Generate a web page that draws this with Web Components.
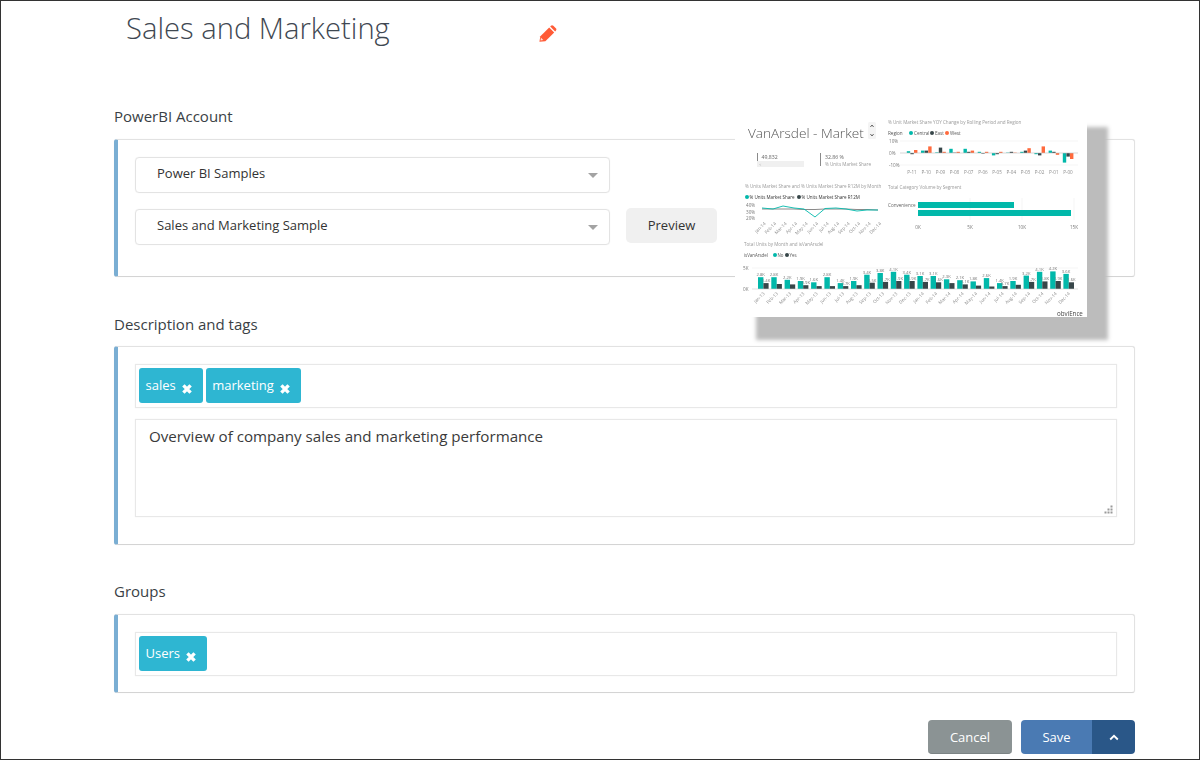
<!DOCTYPE html>
<html lang="en">
<head>
<meta charset="utf-8">
<title>Sales and Marketing</title>
<style>
  html, body { margin: 0; padding: 0; background: #fff; }
  body { font-family: "Open Sans", "Liberation Sans", sans-serif; color: #333; }
</style>
</head>
<body>
<report-page>
  <report-title slot="title">Sales and Marketing</report-title>

  <form-panel label="PowerBI Account" style="--bottom:31px">
    <div style="display:flex;flex-direction:column;gap:16px">
      <select-box>Power BI Samples</select-box>
      <div style="display:flex;align-items:center;gap:16px">
        <select-box>Sales and Marketing Sample</select-box>
        <plain-button>Preview</plain-button>
      </div>
    </div>
  </form-panel>

  <form-panel label="Description and tags" style="--bottom:27px;--label-gap:37px;--label-bottom:12px">
    <tag-box>
      <tag-chip>sales</tag-chip>
      <tag-chip>marketing</tag-chip>
    </tag-box>
    <note-box style="margin-top:11px">Overview of company sales and marketing performance</note-box>
  </form-panel>

  <form-panel label="Groups" style="--bottom:16px;--label-gap:36px">
    <tag-box>
      <tag-chip>Users</tag-chip>
    </tag-box>
  </form-panel>

  <action-bar></action-bar>
  <report-preview></report-preview>
</report-page>

<script>
class ReportPage extends HTMLElement {
  constructor() {
    super();
    this.attachShadow({mode: "open"});
    this.shadowRoot.innerHTML = `
    <style>
      :host {
        display: block;
        position: relative;
        box-sizing: border-box;
        width: 1200px;
        height: 760px;
        overflow: hidden;
        border: 1px solid #333;
        padding: 7px 64px 0 113px;
      }
    </style>
    <slot name="title"></slot>
    <slot></slot>
    `;
  }
}

class ReportTitle extends HTMLElement {
  constructor() {
    super();
    this.attachShadow({mode: "open"});
    this.shadowRoot.innerHTML = `
    <style>
      :host {
        display: flex;
        align-items: flex-start;
        margin: 0 0 0 12px;
      }
      h1 {
        margin: 0;
        width: 413px;
        font: 300 29.2px/40px "Open Sans", "Liberation Sans", sans-serif;
        color: #3f4852;
      }
      svg { margin-top: 17px; }
    </style>
    <h1><slot></slot></h1>
    <svg width="18" height="17" viewBox="0 0 18 17">
      <path fill="#ff5b37" d="M.4 16.7 1.4 11.2 10.2 2.4l5 5-8.8 8.8z"/>
      <path fill="#ff5b37" d="M11.2 1.5l.7-.7a1.7 1.7 0 0 1 2.4 0l2.5 2.5a1.7 1.7 0 0 1 0 2.4l-.7.7z"/>
      <path fill="#ffe0d8" d="M1.5 15.6l.5-2.8 2.3 2.3z"/>
    </svg>
    `;
  }
}

class FormPanel extends HTMLElement {
  constructor() {
    super();
    this.attachShadow({mode: "open"});
    this.shadowRoot.innerHTML = `
    <style>
      :host { display: block; }
      .label {
        font-size: 15px;
        line-height: 20px;
        color: #3a3f45;
        margin: var(--label-gap, 58px) 0 var(--label-bottom, 13px) 0;
      }
      .card {
        box-sizing: border-box;
        background: #fff;
        border: 1px solid #e2e2e2;
        border-bottom-color: #d4d4d4;
        border-left: 4px solid #7aaed3;
        border-radius: 3px;
        box-shadow: 0 0 1px #e6e6e6;
        padding: 17px 17px var(--bottom, 17px) 17px;
      }
    </style>
    <div class="label"></div>
    <div class="card"><slot></slot></div>
    `;
    this.shadowRoot.querySelector(".label").textContent = this.getAttribute("label");
  }
}

class SelectBox extends HTMLElement {
  constructor() {
    super();
    this.attachShadow({mode: "open"});
    this.shadowRoot.innerHTML = `
    <style>
      :host {
        display: flex;
        align-items: center;
        justify-content: space-between;
        box-sizing: border-box;
        width: 475px;
        height: 36px;
        padding: 0 11px 0 21px;
        border: 1px solid #e3e3e3;
        border-radius: 4px;
        box-shadow: 0 0 1px #e8e8e8;
        font-size: 13px;
        color: #333;
      }
      span { margin-top: -4px; }
      i {
        width: 0;
        height: 0;
        border: 5px solid transparent;
        border-top: 5px solid #a3a3a3;
        border-bottom: 0;
      }
    </style>
    <span><slot></slot></span><i></i>
    `;
  }
}

class PlainButton extends HTMLElement {
  constructor() {
    super();
    this.attachShadow({mode: "open"});
    this.shadowRoot.innerHTML = `
    <style>
      :host {
        display: flex;
        align-items: center;
        justify-content: center;
        box-sizing: border-box;
        width: 91px;
        height: 35px;
        padding-bottom: 2px;
        margin-top: -3px;
        background: #f0f0f0;
        border-radius: 5px;
        font-size: 13px;
        color: #333;
      }
    </style>
    <slot></slot>
    `;
  }
}

class TagBox extends HTMLElement {
  constructor() {
    super();
    this.attachShadow({mode: "open"});
    this.shadowRoot.innerHTML = `
    <style>
      :host {
        display: flex;
        gap: 3px;
        box-sizing: border-box;
        height: 44px;
        padding: 3px;
        border: 1px solid #e8e8e8;
        box-shadow: 0 0 1px #ececec;
      }
    </style>
    <slot></slot>
    `;
  }
}

class TagChip extends HTMLElement {
  constructor() {
    super();
    this.attachShadow({mode: "open"});
    this.shadowRoot.innerHTML = `
    <style>
      :host {
        display: inline-flex;
        align-items: center;
        gap: 6px;
        box-sizing: border-box;
        height: 35px;
        padding: 0 11px 0 6.5px;
        background: #2eb6d2;
        border-radius: 3px;
        color: #fff;
        font-size: 13px;
      }
      span { margin-top: -2px; }
      svg { margin-top: 6px; }
    </style>
    <span><slot></slot></span>
    <svg width="10" height="10" viewBox="0 0 10 10">
      <path d="M1.4 1.4l7.2 7.2M8.6 1.4l-7.2 7.2" stroke="#fff" stroke-width="3.4" fill="none"/>
    </svg>
    `;
  }
}

class NoteBox extends HTMLElement {
  constructor() {
    super();
    this.attachShadow({mode: "open"});
    this.shadowRoot.innerHTML = `
    <style>
      :host {
        display: block;
        position: relative;
        box-sizing: border-box;
        height: 98px;
        padding: 6px 13px;
        border: 1px solid #e8e8e8;
        box-shadow: 0 0 1px #ececec;
        font-size: 15.15px;
        line-height: 20px;
        color: #3a3a3a;
      }
      /* resize grip sits over the corner of the box */
      svg { position: absolute; right: 3px; bottom: 2px; }
    </style>
    <slot></slot>
    <svg width="9" height="9" viewBox="0 0 9 9" fill="#9a9a9a">
      <rect x="6.5" y="0.5" width="2" height="2"/>
      <rect x="3.5" y="3.5" width="2" height="2"/>
      <rect x="6.5" y="3.5" width="2" height="2"/>
      <rect x="0.5" y="6.5" width="2" height="2"/>
      <rect x="3.5" y="6.5" width="2" height="2"/>
      <rect x="6.5" y="6.5" width="2" height="2"/>
    </svg>
    `;
  }
}

class ActionBar extends HTMLElement {
  constructor() {
    super();
    this.attachShadow({mode: "open"});
    this.shadowRoot.innerHTML = `
    <style>
      :host {
        display: flex;
        justify-content: flex-end;
        gap: 9px;
        margin-top: 27px;
        font-size: 13px;
        color: #fff;
      }
      div {
        display: flex;
        align-items: center;
        justify-content: center;
        box-sizing: border-box;
        height: 34px;
      }
      .cancel { width: 84px; background: #8b9394; border-radius: 4px; border-bottom: 1px solid #7b8384; }
      .save { width: 71px; background: #4a7ab3; border-radius: 4px 0 0 4px; }
      .more { width: 43px; margin-left: -9px; background: #2a5788; border-radius: 0 4px 4px 0; }
    </style>
    <div class="cancel">Cancel</div>
    <div class="save">Save</div>
    <div class="more">
      <svg width="10" height="7" viewBox="0 0 10 7">
        <path d="M1.2 5.5 5 1.8l3.8 3.7" stroke="#fff" stroke-width="1.8" fill="none"/>
      </svg>
    </div>
    `;
  }
}

class ReportPreview extends HTMLElement {
  constructor() {
    super();
    this.attachShadow({mode: "open"});
    this.shadowRoot.innerHTML = `
    <style>
      :host {
        display: block;
        position: absolute;
        left: 734px;
        top: 103px;
        width: 352px;
        height: 213px;
        background: #fff;
        box-shadow: 21px 23px 4px #bcbcbc;
      }
      svg {
        display: block;
        filter: blur(.4px);
        font-family: "Open Sans", "Liberation Sans", sans-serif;
      }
    </style>
    ${this.chart()}
    `;
  }

  label(x, y, size, str, fill, extra) {
    return `<text x="${x}" y="${y}" font-size="${size}" fill="${fill || "#9a9a9a"}" ${extra || ""}>${str}</text>`;
  }

  dot(x, y, fill) {
    return `<circle cx="${x}" cy="${y}" r="2" fill="${fill}"/>`;
  }

  slanted(x, y, str) {
    return `<text x="${x}" y="${y}" font-size="4.5" fill="#8d8d8d" text-anchor="end" transform="rotate(-45 ${x} ${y})">${str}</text>`;
  }

  yoyChart() {
    const teal = "#01b8aa", dark = "#374649";
    const orange = "#ff6a3d";
    const rows = [[1.5,-1,2.5],[2,2,5.5],[.5,4.5,1],[3.5,.3,1],[3.5,1,2],[1,-.5,1],[-2,-1,1],[.3,1,.3],[1,2,4],[-1,-2,5.5],[2,1,-1.5],[-8,-3,-5]];
    const colors = [teal, dark, orange];
    let out = "";
    out += this.label(888, 124, 4.6, "% Unit Market Share YOY Change by Rolling Period and Region");
    out += this.label(888, 135, 4.6, "Region", "#555");
    out += this.dot(911, 133, teal) + this.label(914, 135, 4.6, "Central", "#555");
    out += this.dot(932, 133, dark) + this.label(935, 135, 4.6, "East", "#555");
    out += this.dot(947, 133, orange) + this.label(950, 135, 4.6, "West", "#555");
    [["10%",141],["0%",153],["-10%",165]].forEach(([t, y]) => {
      out += this.label(889, y + 1.5, 4.6, t, "#777");
      if (y !== 153) out += `<line x1="900" x2="1078" y1="${y}" y2="${y}" stroke="#efefef" stroke-width=".6"/>`;
    });
    rows.forEach((r, i) => {
      const cx = 912 + i * 14.18;
      r.forEach((v, j) => {
        const h = Math.abs(v) * 1.2;
        const y = v > 0 ? 153 - h : 153;
        out += `<rect x="${(cx - 5.2 + j * 3.6).toFixed(1)}" y="${y}" width="3.4" height="${h}" fill="${colors[j]}"/>`;
      });
      const name = "P-" + String(11 - i).padStart(2, "0");
      out += `<text x="${cx.toFixed(1)}" y="173.5" font-size="4.6" fill="#8d8d8d" text-anchor="middle">${name}</text>`;
    });
    out += `<line x1="900" x2="1078" y1="153" y2="153" stroke="#bdbdbd" stroke-width=".6"/>`;
    return out;
  }

  lineChart() {
    const teal = "#01b8aa", dark = "#374649";
    const months = ["Jan","Feb","Mar","Apr","May","Jun","Jul","Aug","Sep","Oct","Nov","Dec"];
    let out = "";
    out += this.label(745, 187.5, 4.56, "% Units Market Share and % Units Market Share R12M by Month");
    out += this.dot(747, 197, teal) + this.label(749.5, 199, 4.5, "% Units Market Share", "#333");
    out += this.dot(799, 197, dark) + this.label(801.5, 199, 4.5, "% Units Market Share R12M", "#333");
    [["40%",205],["30%",212],["20%",218]].forEach(([t, y]) => {
      out += this.label(746, y + 1.5, 4.6, t, "#777");
    });
    out += `<polyline fill="none" stroke="#8a8a8a" stroke-width="1" points="762,209 773,209 783,209 794,209 804,209.5 815,209.5 825,209 836,209 846,209 857,209.5 867,209.5 878,210"/>`;
    out += `<polyline fill="none" stroke="${teal}" stroke-width=".9" points="762,208 773,209 783,206 794,208 804,209 815,217 825,208.5 836,208 846,209 857,211 867,210 878,210"/>`;
    months.forEach((m, i) => {
      out += this.slanted(766 + i * 10.5, 224, m + "-14");
    });
    return out;
  }

  segmentChart() {
    const teal = "#01b8aa";
    let out = "";
    out += this.label(888, 189, 4.5, "Total Category Volume by Segment");
    out += this.label(888, 207, 4.6, "Convenience", "#666");
    ["0K","5K","10K","15K"].forEach((t, i) => {
      const x = 918 + i * 52;
      if (i) out += `<line x1="${x}" x2="${x}" y1="198" y2="220" stroke="#efefef" stroke-width=".6"/>`;
      out += `<text x="${x}" y="229" font-size="4.6" fill="#777" text-anchor="middle">${t}</text>`;
    });
    out += `<rect x="918" y="202" width="96" height="6" fill="${teal}"/>`;
    out += `<rect x="918" y="210" width="153" height="6" fill="${teal}"/>`;
    return out;
  }

  unitsChart() {
    const teal = "#01b8aa", dark = "#374649";
    const months = ["Jan","Feb","Mar","Apr","May","Jun","Jul","Aug","Sep","Oct","Nov","Dec"];
    const no = [2.8,2.8,2.2,1.9,1.6,2.8,1.4,1.9,3.4,3.8,4.1,3.4,3.1,3.1,2.3,2.1,1.8,2.6,1.4,1.9,3.2,4.1,4.2,3.6];
    const yes = [1.4,1.2,1.1,.9,.7,.7,.7,.9,1.5,1.7,1.9,1.9,1.7,1.6,1.4,1.1,.8,.6,.7,1,1.7,1.8,1.9,1.6];
    let out = "";
    out += this.label(744, 245.5, 4.55, "Total Units by Month and isVanArsdel");
    out += this.label(744, 257, 4.4, "isVanArsdel", "#555");
    out += this.dot(775, 255, teal) + this.label(777.5, 257, 4.4, "No", "#555");
    out += this.dot(787, 255, dark) + this.label(789.5, 257, 4.4, "Yes", "#555");
    out += this.label(743, 270, 4.6, "5K", "#777") + this.label(743, 291, 4.6, "0K", "#777");
    out += `<line x1="752" x2="1078" y1="268" y2="268" stroke="#efefef" stroke-width=".6"/>`;
    no.forEach((v, i) => {
      const x = 758 + i * 13.28;
      const h1 = v * 4.2, h2 = yes[i] * 4.2;
      out += `<rect x="${x.toFixed(1)}" y="${(289 - h1).toFixed(1)}" width="5.4" height="${h1.toFixed(1)}" fill="${teal}"/>`;
      out += `<rect x="${(x + 5.4).toFixed(1)}" y="${(289 - h2).toFixed(1)}" width="5.2" height="${h2.toFixed(1)}" fill="${dark}"/>`;
      out += `<text x="${(x + 2.7).toFixed(1)}" y="${(288 - h1).toFixed(1)}" font-size="4.2" fill="#777" text-anchor="middle">${v.toFixed(1)}K</text>`;
      if (i % 3 === 0 || v > 3) {
        out += `<text x="${(x + 8).toFixed(1)}" y="${(288 - h2).toFixed(1)}" font-size="4.2" fill="#777" text-anchor="middle">${yes[i].toFixed(1)}K</text>`;
      }
      const yr = i < 12 ? "-13" : "-14";
      out += this.slanted(x + 7, 294, months[i % 12] + yr);
    });
    out += `<line x1="752" x2="1078" y1="289" y2="289" stroke="#cfcfcf" stroke-width=".6"/>`;
    return out;
  }

  chart() {
    return `
    <svg width="352" height="213" viewBox="735 104 352 213">
      ${this.label(748, 138, 13.6, "VanArsdel - Market", "#555", 'font-weight="300"')}
      <rect x="868" y="122" width="8" height="17" rx="1.5" fill="#f4f4f4"/>
      <path d="M870.4 127l1.6-2 1.6 2M870.4 134l1.6 2 1.6-2" stroke="#555" stroke-width=".9" fill="none"/>

      <rect x="757" y="153" width="1" height="9" fill="#8a8a8a"/>
      ${this.label(761.5, 159, 5.2, "49,832", "#666")}
      <rect x="757" y="161" width="47" height="6" fill="#f0f0f0"/>
      ${this.label(759, 165.5, 4, "&lt;", "#999")}
      <rect x="820" y="153" width="1" height="13" fill="#8a8a8a"/>
      ${this.label(825, 159, 5.2, "32.86 %", "#666")}
      ${this.label(825, 165.5, 4.6, "% Units Market Share", "#999")}

      ${this.yoyChart()}
      ${this.lineChart()}
      ${this.segmentChart()}
      ${this.unitsChart()}
      ${this.label(1057, 315.5, 6.2, "obviEnce", "#444")}
    </svg>
    `;
  }
}

customElements.define("report-page", ReportPage);
customElements.define("report-title", ReportTitle);
customElements.define("form-panel", FormPanel);
customElements.define("select-box", SelectBox);
customElements.define("plain-button", PlainButton);
customElements.define("tag-box", TagBox);
customElements.define("tag-chip", TagChip);
customElements.define("note-box", NoteBox);
customElements.define("action-bar", ActionBar);
customElements.define("report-preview", ReportPreview);
</script>
</body>
</html>
